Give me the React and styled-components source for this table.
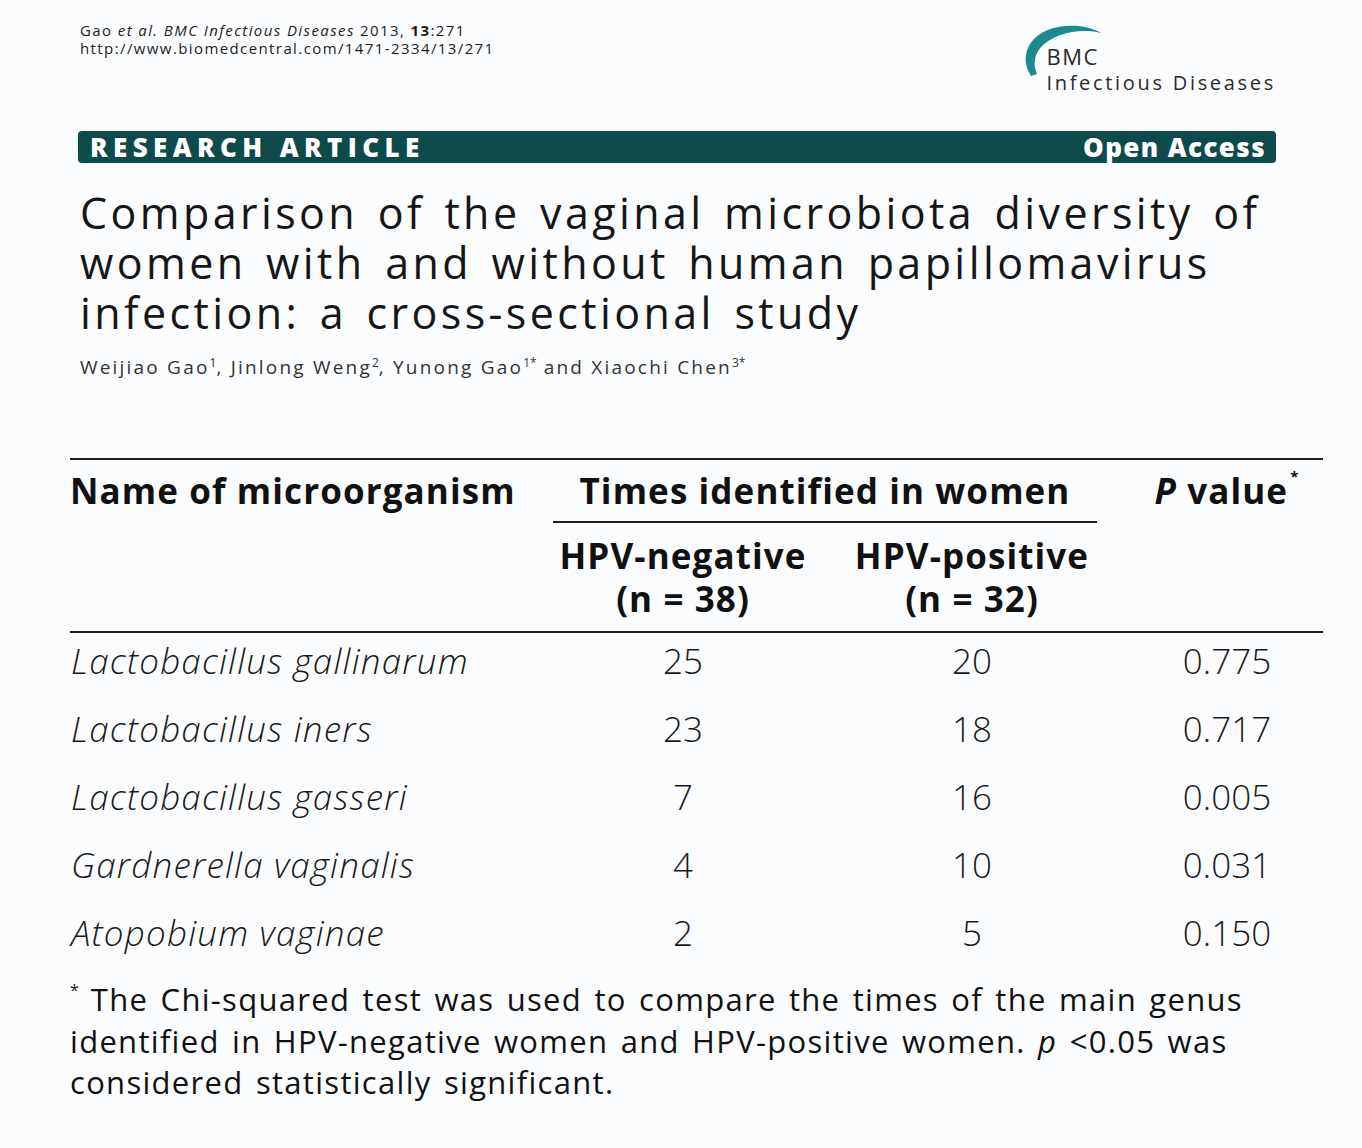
import React from "react";
import styled, { createGlobalStyle } from "styled-components";

const GlobalStyle = createGlobalStyle`
  html, body { margin: 0; padding: 0; background: #fbfcfe; }
  body { font-family: "Open Sans", "Noto Sans", sans-serif; color: #141414; }
`;

const Page = styled.div`
  width: 1362px;
  min-height: 1148px;
  box-sizing: border-box;
  padding: 0 39px 0 70px;
  background: #fbfcfe;
`;

const TopBar = styled.header`
  display: flex;
  justify-content: space-between;
  align-items: flex-start;
  padding: 21px 47px 0 10px;
  height: 110px;
  box-sizing: border-box;
`;

const Citation = styled.div`
  font-size: 15px;
  line-height: 18px;
  letter-spacing: 1.4px;
  color: #1c1c1c;
  em { font-style: italic; }
  b { font-weight: 700; }
`;

const Logo = styled.div`
  position: relative;
  padding: 24px 0 0 24px;
  color: #2a2a2a;
  svg { position: absolute; left: 0; top: 3px; }
`;

const LogoMark = styled.div`
  font-size: 22px;
  line-height: 22px;
  letter-spacing: 1.6px;
`;

const LogoName = styled.div`
  margin-top: 4px;
  font-size: 20px;
  line-height: 24px;
  letter-spacing: 2.7px;
`;

const Banner = styled.div`
  display: flex;
  justify-content: space-between;
  align-items: center;
  height: 32px;
  margin: 21px 47px 0 8px;
  padding: 0 10px 0 12px;
  background: #0f4a4a;
  border-radius: 4px;
  color: #fff;
  font-weight: 800;
`;

const BannerLabel = styled.span`
  font-size: 26px;
  line-height: 32px;
  letter-spacing: ${(p) => p.$spacing || "0px"};
`;

const Title = styled.h1`
  margin: 25px 0 0 10px;
  font-size: 43px;
  line-height: 50px;
  font-weight: 400;
  letter-spacing: 3.4px;
  word-spacing: 5px;
  color: #161616;
`;

const Authors = styled.p`
  margin: 17px 0 0 10px;
  font-size: 19px;
  line-height: 24px;
  letter-spacing: 2.2px;
  color: #333;
  sup { font-size: 12px; line-height: 0; letter-spacing: 0; }
`;

const Table = styled.section`
  margin-top: 79px;
  border-top: 2px solid #1e1e1e;
`;

const cols = "483px 260px 318px 192px";

const Head = styled.div`
  display: grid;
  grid-template-columns: ${cols};
  grid-template-rows: 63px 108px;
  border-bottom: 2px solid #1e1e1e;
  font-weight: 700;
  font-size: 35px;
  letter-spacing: 1.1px;
  color: #111;
`;

const HeadCell = styled.div`
  grid-column: ${(p) => p.$col};
  grid-row: ${(p) => p.$row || "1"};
  display: flex;
  flex-direction: column;
  align-items: ${(p) => p.$align || "center"};
  padding-top: ${(p) => p.$top || "9px"};
  line-height: 43px;
  text-align: center;
  white-space: nowrap;
  box-sizing: border-box;
  ${(p) => p.$rule && "border-bottom: 2px solid #1e1e1e; margin-right: 34px;"}
  i { font-style: italic; }
  sup { font-size: 15px; line-height: 0; vertical-align: 22px; margin-left: 2px; }
`;

const Body = styled.div`
  margin-top: -6px;
`;

const Row = styled.div`
  display: grid;
  grid-template-columns: ${cols};
  height: 68px;
  align-items: center;
  font-size: 35px;
  line-height: 44px;
  color: #1a1a1a;
`;

const Name = styled.div`
  font-style: italic;
  font-weight: 300;
  letter-spacing: 1.2px;
  padding-left: 1px;
`;

const Num = styled.div`
  text-align: center;
  font-weight: 300;
`;

const Footnote = styled.p`
  margin: 12px 0 0 0;
  font-size: 31px;
  line-height: 41.5px;
  letter-spacing: 1.3px;
  word-spacing: 3px;
  color: #111;
  white-space: nowrap;
  sup { font-size: 16px; line-height: 0; vertical-align: 15px; margin-right: 12px; letter-spacing: 0; }
  i { font-style: italic; }
`;

const rows = [
  { name: "Lactobacillus gallinarum", neg: "25", pos: "20", p: "0.775" },
  { name: "Lactobacillus iners", neg: "23", pos: "18", p: "0.717" },
  { name: "Lactobacillus gasseri", neg: "7", pos: "16", p: "0.005" },
  { name: "Gardnerella vaginalis", neg: "4", pos: "10", p: "0.031" },
  { name: "Atopobium vaginae", neg: "2", pos: "5", p: "0.150" },
];

const BmcArc = () => (
  <svg width="82" height="56" viewBox="0 0 82 56">
    <path
      d="M79 9 C62 -2 22 -2 8 20 C2 30 2 41 9 52 L15 50 C11 41 12 31 19 23 C33 9 58 4 79 9 Z"
      fill="#1d8a8e"
    />
  </svg>
);

export default function App() {
  return (
    <Page>
      <GlobalStyle />
      <TopBar>
        <Citation>
          Gao <em>et al. BMC Infectious Diseases</em> 2013, <b>13</b>:271
          <br />
          http://www.biomedcentral.com/1471-2334/13/271
        </Citation>
        <Logo>
          <BmcArc />
          <LogoMark>BMC</LogoMark>
          <LogoName>Infectious Diseases</LogoName>
        </Logo>
      </TopBar>

      <Banner>
        <BannerLabel $spacing="5.4px">RESEARCH ARTICLE</BannerLabel>
        <BannerLabel $spacing="1.4px">Open Access</BannerLabel>
      </Banner>

      <Title>
        Comparison of the vaginal microbiota diversity of
        <br />
        women with and without human papillomavirus
        <br />
        infection: a cross-sectional study
      </Title>

      <Authors>
        Weijiao Gao<sup>1</sup>, Jinlong Weng<sup>2</sup>, Yunong Gao<sup>1*</sup> and Xiaochi Chen<sup>3*</sup>
      </Authors>

      <Table>
        <Head>
          <HeadCell $col="1" $align="flex-start">Name of microorganism</HeadCell>
          <HeadCell $col="2 / 4" $rule>Times identified in women</HeadCell>
          <HeadCell $col="4">
            <span>
              <i>P</i> value<sup>*</sup>
            </span>
          </HeadCell>
          <HeadCell $col="2" $row="2" $top="11px">
            <span>HPV-negative</span>
            <span>(n = 38)</span>
          </HeadCell>
          <HeadCell $col="3" $row="2" $top="11px">
            <span>HPV-positive</span>
            <span>(n = 32)</span>
          </HeadCell>
        </Head>
        <Body>
          {rows.map((r) => (
            <Row key={r.name}>
              <Name>{r.name}</Name>
              <Num>{r.neg}</Num>
              <Num>{r.pos}</Num>
              <Num>{r.p}</Num>
            </Row>
          ))}
        </Body>
      </Table>

      <Footnote>
        <sup>*</sup>The Chi-squared test was used to compare the times of the main genus
        <br />
        identified in HPV-negative women and HPV-positive women. <i>p</i> &lt;0.05 was
        <br />
        considered statistically significant.
      </Footnote>
    </Page>
  );
}
